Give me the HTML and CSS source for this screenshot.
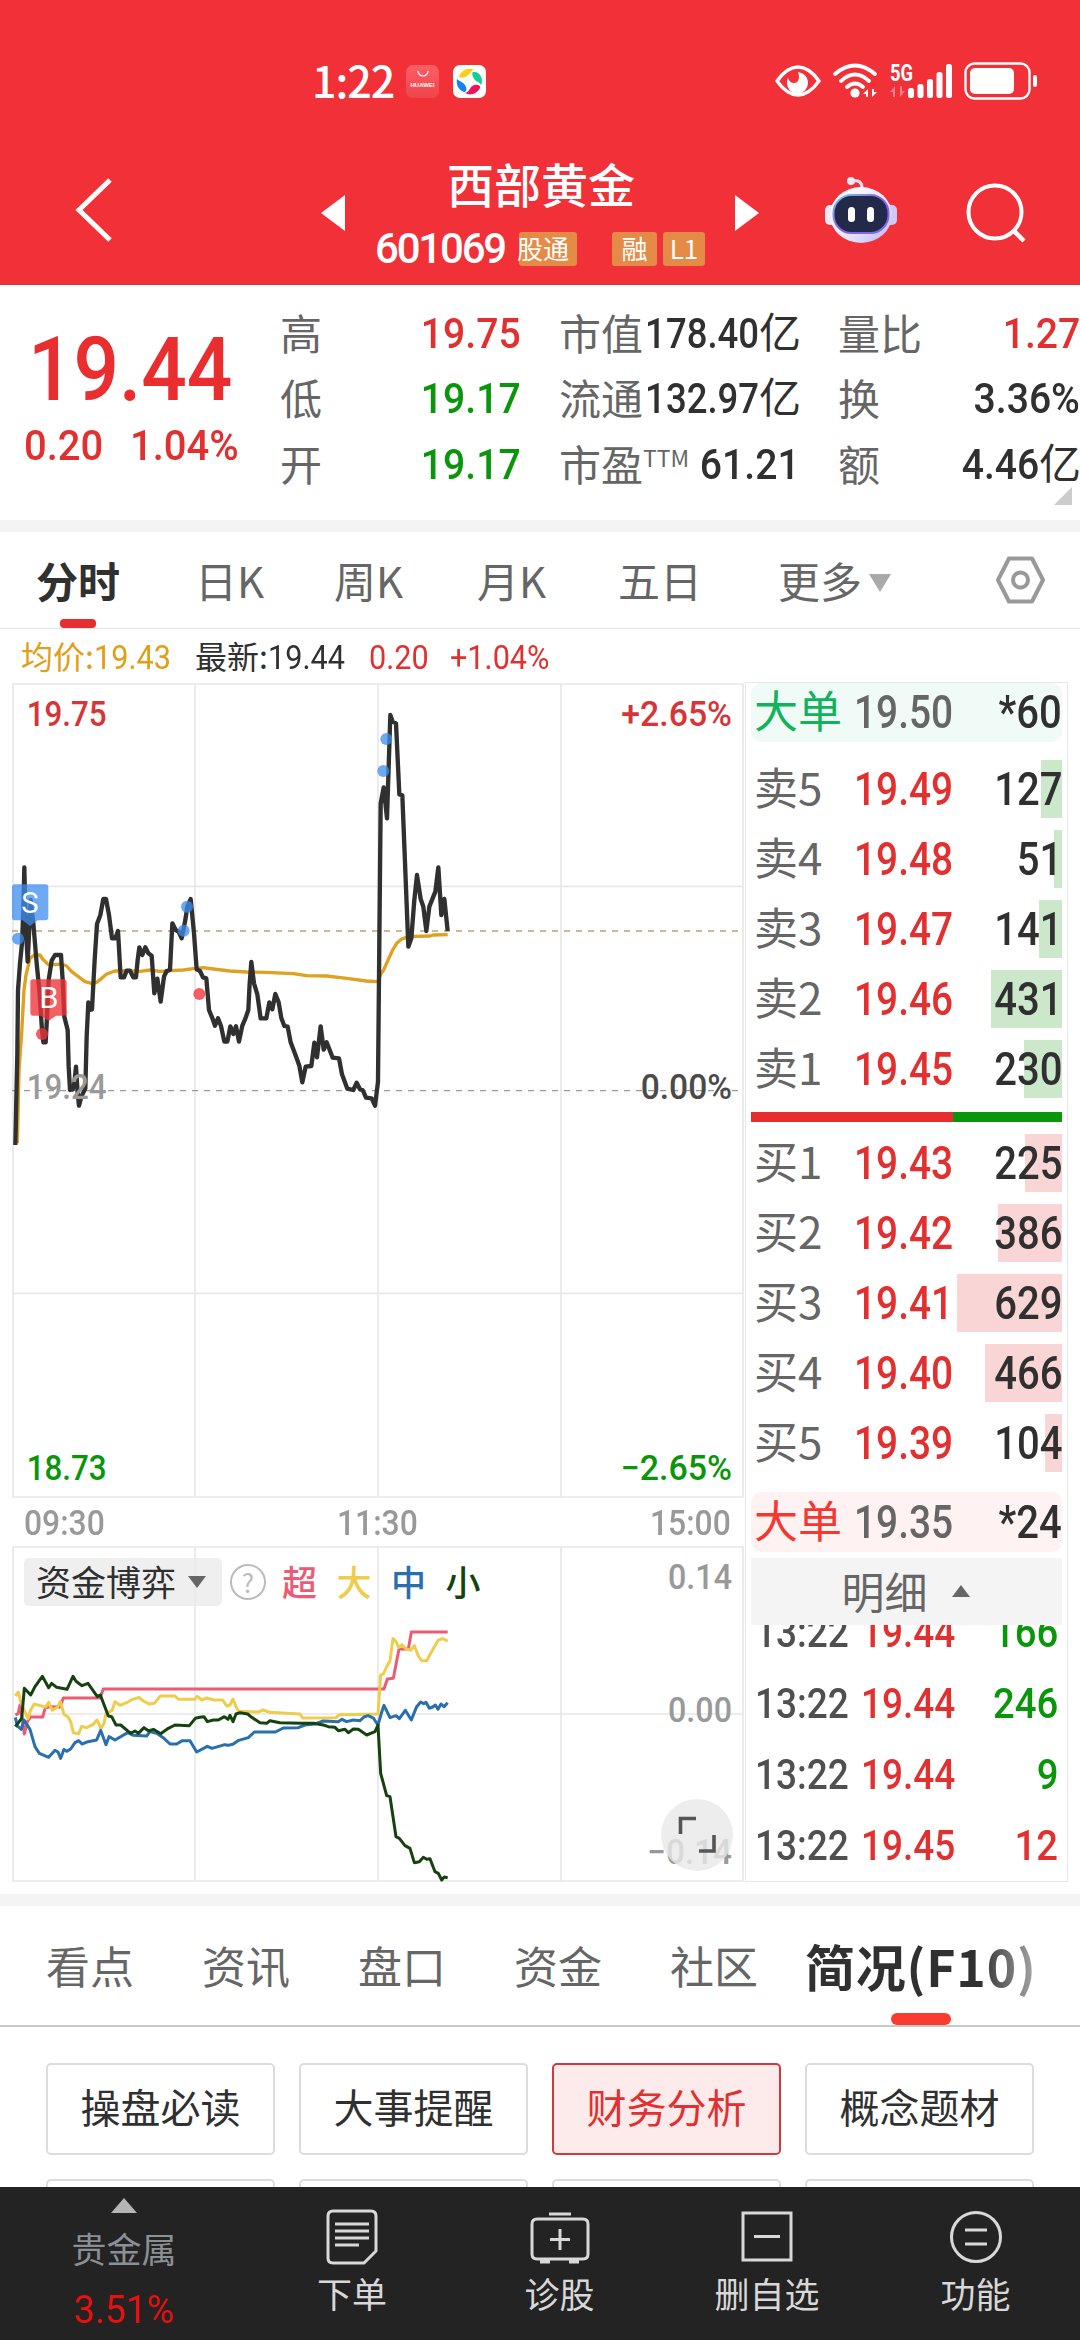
FILE: index.html
```html
<!DOCTYPE html>
<html lang="zh-CN">
<head>
  <meta charset="UTF-8" />
  <meta name="viewport" content="width=device-width, initial-scale=1.0"/>
  <title>西部黄金 601069</title>
  <link rel="stylesheet" href="styles.css">
</head>
<body>

  <header class="header">
    <!-- 状态栏 -->
    <div class="status">
      <div class="status-left">
        <span class="clock">1:22</span>
        <span class="app-huawei">
          <svg width="12" height="7" viewBox="0 0 12 7"><path d="M1 0a5 5 0 0 0 10 0" fill="none" stroke="#fff" stroke-width="1.2"/></svg>
          <span>HUAWEI</span>
        </span>
        <svg class="app-swirl" width="33" height="33" viewBox="0 0 33 33">
          <rect width="33" height="33" rx="7" fill="#fff"/>
          <path d="M6 12C8 5 16 2 21 5C17 6 17 10 12 12C9 13 7 13 6 12Z" fill="#f9cf12"/>
          <path d="M20 7C27 6 31 14 28 20C26 16 22 17 20 12C19 9 19 8 20 7Z" fill="#13cf91"/>
          <path d="M4 14C7 17 11 17 13 22C14 25 13 27 11 27C5 25 3 19 4 14Z" fill="#1383f2"/>
          <path d="M12 28C17 27 16 22 21 20C25 19 28 21 27 23C24 29 17 31 12 28Z" fill="#f21257"/>
        </svg>
      </div>
      <div class="status-right">
        <svg width="46" height="32" viewBox="0 0 46 32">
          <path d="M2 16Q12 2 23 2T44 16Q34 30 23 30T2 16Z" fill="none" stroke="#fff" stroke-width="3.4" stroke-linejoin="round"/>
          <path d="M23 7c5 1 10 4 10 11a10.500 10.500 0 0 1-21 0c0-2 0-3 1-5c1 3 3 5 6 5c5 0 6-6 4-11z" fill="#fff"/>
        </svg>
        <svg class="wifi" width="44" height="36" viewBox="0 0 44 36">
          <g fill="none" stroke="#fff" stroke-width="3.800" stroke-linecap="round">
            <path d="M2 11Q22-6 42 11M8 18Q22 5 36 18M14 24Q22 17 30 24"/>
          </g>
          <circle cx="22" cy="30" r="4.600" fill="#fff"/>
          <path d="M30 31l5-5v8h-2v-3zM44 29l-5 5v-8h2v3z" fill="#fff"/>
        </svg>
        <svg class="signal" width="64" height="36" viewBox="0 0 64 36">
          <text x="1" y="18" textLength="23" lengthAdjust="spacingAndGlyphs" class="net">5G</text>
          <path d="M1 29l5-6v11h-2v-5zM16 28l-5 6v-11h2v5z" fill="#ff8185"/>
          <g fill="#fff">
            <rect x="19" y="25" width="6" height="10" rx="2.500"/>
            <rect x="28.500" y="21" width="6" height="14" rx="2.500"/>
            <rect x="38" y="16" width="6" height="19" rx="2.500"/>
            <rect x="47.500" y="9" width="6" height="26" rx="2.500"/>
            <rect x="57" y="1" width="6" height="34" rx="2.500"/>
          </g>
        </svg>
        <svg class="battery" width="74" height="38" viewBox="0 0 74 38">
          <rect x="1.500" y="1.500" width="64" height="35" rx="9" fill="none" stroke="#fff" stroke-width="2.400"/>
          <rect x="6" y="6" width="44" height="26" rx="5" fill="#fff"/>
          <rect x="69" y="13" width="4" height="12" rx="2" fill="#fff"/>
        </svg>
      </div>
    </div>

    <!-- 标题栏 -->
    <div class="nav">
      <svg class="back" width="38" height="66" viewBox="0 0 38 66"><path d="M35 3L4 33L35 63" fill="none" stroke="#fff" stroke-width="5"/></svg>
      <svg class="prev" width="24" height="36" viewBox="0 0 24 36"><path d="M24 0v36L0 18z" fill="#fff"/></svg>
      <div class="stock">
        <h1>西部黄金</h1>
        <div class="stock-sub">
          <span class="code">601069</span>
          <span class="tag tag-cut">股通</span>
          <span class="tag tag-rong">融</span>
          <span class="tag tag-l1">L1</span>
        </div>
      </div>
      <svg class="next" width="24" height="36" viewBox="0 0 24 36"><path d="M0 0v36l24-18z" fill="#fff"/></svg>
      <svg class="robot" width="72" height="68" viewBox="0 0 72 68">
        <defs>
          <linearGradient id="shell" x1="0" y1="0" x2="1" y2="1">
            <stop offset="0" stop-color="#fff"/><stop offset=".55" stop-color="#eeeafc"/><stop offset="1" stop-color="#b9b2f0"/>
          </linearGradient>
          <linearGradient id="rim" x1="0" y1="0" x2="1" y2="1">
            <stop offset="0" stop-color="#77c9e8"/><stop offset=".5" stop-color="#8a5be8"/><stop offset="1" stop-color="#7b6cf0"/>
          </linearGradient>
        </defs>
        <path d="M27 5Q37 3 37 12" fill="none" stroke="#f3dff0" stroke-width="3"/>
        <circle cx="26" cy="5" r="4" fill="#f8e6f0"/>
        <rect x="0" y="29" width="12" height="20" rx="5" fill="#ece9fb"/>
        <rect x="60" y="29" width="12" height="20" rx="5" fill="#cfc9f3"/>
        <ellipse cx="36" cy="39" rx="31" ry="28" fill="url(#shell)"/>
        <rect x="8.500" y="19" width="55" height="38" rx="18" fill="#232a49" stroke="url(#rim)" stroke-width="2"/>
        <rect x="23" y="31" width="7" height="15" rx="3.500" fill="#fff"/>
        <rect x="42" y="31" width="7" height="15" rx="3.500" fill="#fff"/>
      </svg>
      <svg class="search" width="62" height="62" viewBox="0 0 62 62"><circle cx="29" cy="29" r="26.500" fill="none" stroke="#fff" stroke-width="4"/><path d="M48 48L58 58" stroke="#fff" stroke-width="4.500"/></svg>
    </div>
  </header>

  <!-- 行情概要 -->
  <section class="quote">
    <div class="quote-price">
      <div class="price"><span class="num">19.44</span></div>
      <div class="change"><span class="num">0.20</span><span class="num">1.04%</span></div>
    </div>
    <dl class="quote-col">
      <div><dt>高</dt><dd class="red"><span class="num">19.75</span></dd></div>
      <div><dt>低</dt><dd class="green"><span class="num">19.17</span></dd></div>
      <div><dt>开</dt><dd class="green"><span class="num">19.17</span></dd></div>
    </dl>
    <dl class="quote-col">
      <div><dt>市值</dt><dd><span class="num tight">178.40</span>亿</dd></div>
      <div><dt>流通</dt><dd><span class="num tight">132.97</span>亿</dd></div>
      <div><dt>市盈<sup>TTM</sup></dt><dd><span class="num">61.21</span></dd></div>
    </dl>
    <dl class="quote-col">
      <div><dt>量比</dt><dd class="red"><span class="num">1.27</span></dd></div>
      <div><dt>换</dt><dd><span class="num">3.36%</span></dd></div>
      <div><dt>额</dt><dd><span class="num">4.46</span>亿</dd></div>
    </dl>
    <i class="corner"></i>
  </section>

  <!-- 周期切换 -->
  <nav class="periods">
    <span class="active">分时</span>
    <span>日K</span>
    <span>周K</span>
    <span>月K</span>
    <span>五日</span>
    <span class="more">更多<i></i></span>
    <svg width="50" height="50" viewBox="0 0 50 50" fill="none" stroke="#999" stroke-width="4" stroke-linejoin="round">
      <path d="M14 3.500H37L48 25L37 46.500H14L3 25Z"/><circle cx="25.500" cy="25" r="7.500"/>
    </svg>
  </nav>

  <div class="legend">
    <span class="avg">均价:<span class="num">19.43</span></span>
    <span class="last">最新:<span class="num">19.44</span></span>
    <span class="num red">0.20</span>
    <span class="num red">+1.04%</span>
  </div>

  <section class="board">
    <div class="charts">
      <!-- 分时图，坐标为三倍像素 -->
      <svg class="chart-main" width="733" height="815" viewBox="36 39 2199 2445">
        <g class="grid">
          <path d="M39 42H2229V2481H39ZM585 42V2481M1134 42V2481M1683 42V2481M39 649H2229M39 1870H2229"/>
        </g>
        <path class="dash last-line" d="M36 783H2229"/>
        <path class="dash" d="M36 1262H2229"/>
        <polyline class="avg-line" points="52,1420 57,1200 65,1090 72,960 78,915 90,865 103,855 120,855 128,867 145,884 165,884 185,882 200,888 215,905 235,920 255,935 275,940 290,937 305,925 320,912 345,903 380,902 420,904 450,900 480,904 510,902 550,900 580,896 610,893 640,897 690,903 740,906 800,907 880,911 920,917 980,918 1040,925 1100,933 1134,935 1142,912 1151,900 1165,868 1178,840 1190,820 1205,807 1225,800 1250,799 1290,798 1300,795 1343,794"/>
        <polyline class="price-line" points="46,1425 52,1150 54,960 60,880 66,820 70,720 73,592 77,760 83,875 92,690 100,760 110,880 118,960 126,1080 130,1117 137,1117 140,1060 146,930 155,872 165,855 183,855 188,930 193,1040 203,1080 206,1190 210,1260 218,1258 223,1240 228,1190 233,1270 237,1307 244,1280 256,1255 260,1100 265,997 269,1020 276,1018 284,870 291,762 301,735 310,687 318,687 327,735 336,805 346,805 354,783 362,922 372,922 380,902 390,902 400,922 408,922 413,870 418,832 427,855 436,832 445,850 455,857 463,970 472,926 482,995 492,920 500,903 510,900 517,760 527,780 536,785 545,805 556,750 562,710 572,687 582,790 590,898 600,903 609,922 619,925 627,1020 636,1042 645,1067 654,1045 663,1068 673,1115 682,1115 691,1069 700,1092 708,1069 717,1115 727,1067 736,1046 745,1020 749,940 754,876 762,940 772,973 782,1045 799,1045 808,997 817,1018 826,972 836,997 844,1044 853,1068 863,1070 872,1117 890,1165 898,1187 907,1237 917,1190 934,1188 943,1118 951,1162 962,1069 971,1139 980,1117 998,1163 1017,1165 1026,1213 1042,1256 1060,1260 1070,1238 1080,1258 1088,1260 1098,1283 1115,1285 1125,1307 1134,1235 1142,400 1151,352 1161,445 1171,135 1178,155 1188,160 1198,373 1207,376 1225,830 1234,805 1243,690 1251,615 1262,687 1270,710 1279,783 1288,710 1306,665 1315,592 1324,735 1333,687 1343,783"/>
        <g class="dot-sell"><circle cx="54" cy="806" r="18"/><circle cx="551" cy="782" r="18"/><circle cx="561" cy="710" r="18"/><circle cx="1150" cy="303" r="18"/><circle cx="1159" cy="207" r="18"/></g>
        <g class="dot-buy"><circle cx="126" cy="1092" r="18"/><circle cx="598" cy="972" r="18"/></g>
        <path class="flag-sell" d="M44 643H136Q145 643 145 652V742Q145 751 136 751H113L90 768L68 751H44Q36 751 36 742V652Q36 643 44 643Z"/>
        <text class="flag" x="64" y="729" textLength="52" lengthAdjust="spacingAndGlyphs">S</text>
        <path class="flag-buy" d="M99 928H191Q200 928 200 937V1028Q200 1037 191 1037H168L146 1053L122 1037H99Q91 1037 91 1028V937Q91 928 99 928Z"/>
        <text class="flag" x="118" y="1014" textLength="58" lengthAdjust="spacingAndGlyphs">B</text>
        <g class="axis">
          <text class="up" x="80" y="168" textLength="240" lengthAdjust="spacingAndGlyphs">19.75</text>
          <text class="up" x="1864" y="168" textLength="332" lengthAdjust="spacingAndGlyphs">+2.65%</text>
          <text class="mid" x="80" y="1287" textLength="240" lengthAdjust="spacingAndGlyphs">19.24</text>
          <text class="zero" x="1922" y="1287" textLength="274" lengthAdjust="spacingAndGlyphs">0.00%</text>
          <text class="down" x="80" y="2430" textLength="240" lengthAdjust="spacingAndGlyphs">18.73</text>
          <text class="down" x="1862" y="2430" textLength="334" lengthAdjust="spacingAndGlyphs">−2.65%</text>
        </g>
      </svg>

      <div class="times"><span class="num">09:30</span><span class="num">11:30</span><span class="num">15:00</span></div>

      <!-- 资金博弈 -->
      <div class="funds">
        <svg class="chart-sub" width="733" height="336" viewBox="36 318 2199 1008">
          <g class="grid">
            <path d="M39 321H2229V1323H39ZM585 321V1323M1134 321V1323M1683 321V1323M39 822H2229"/>
          </g>
          <polyline class="super" points="46,824 54,822 60,795 66,830 73,882 82,845 92,831 128,831 136,803 150,800 180,801 190,774 300,774 310,747 1152,747 1162,717 1180,715 1197,627 1225,627 1234,576 1343,576"/>
          <polyline class="big" points="46,768 55,756 62,785 73,812 84,836 92,810 102,793 118,796 137,801 146,787 157,811 172,802 181,785 192,823 204,831 212,845 220,878 236,881 245,859 260,863 280,853 291,840 303,865 312,850 318,820 336,812 345,785 360,796 380,788 395,779 417,772 430,783 447,792 463,790 481,768 525,768 536,778 584,778 592,769 605,780 620,774 642,780 668,780 680,798 690,795 699,777 708,800 716,814 775,816 790,810 808,817 900,822 908,834 1008,833 1018,824 1134,822 1142,705 1150,702 1161,678 1170,662 1179,596 1188,605 1196,622 1206,614 1216,625 1232,631 1243,617 1255,648 1265,662 1280,662 1292,640 1315,600 1330,596 1343,604"/>
          <polyline class="middle" points="46,832 52,858 64,868 72,840 90,868 105,920 118,940 146,952 165,931 174,936 182,955 192,928 200,934 212,927 225,908 236,902 246,912 264,905 290,900 302,871 318,914 327,890 345,900 383,878 400,886 440,888 450,875 470,880 492,895 510,912 530,912 547,902 570,902 590,936 622,919 636,925 674,914 685,916 700,912 716,901 745,893 763,876 826,876 850,864 895,863 915,855 945,852 970,843 1015,845 1026,838 1040,845 1060,840 1080,842 1092,831 1104,827 1120,834 1134,855 1144,820 1152,796 1170,833 1188,827 1198,836 1216,811 1234,840 1250,800 1262,786 1271,791 1278,787 1288,805 1298,801 1306,795 1314,808 1323,792 1332,800 1343,788"/>
          <polyline class="small" points="46,860 65,835 73,745 92,765 105,740 127,709 146,743 155,730 170,742 201,748 219,709 228,724 246,737 264,730 292,770 301,765 325,828 335,830 348,855 362,855 392,880 405,873 415,880 432,863 446,873 460,868 482,881 505,865 525,855 568,857 586,835 600,832 612,830 622,845 640,840 655,840 673,830 684,838 690,826 699,845 708,822 720,818 743,822 755,832 780,848 800,850 810,842 840,848 905,850 940,850 970,855 985,860 1005,862 1015,872 1035,868 1045,878 1060,867 1075,868 1100,885 1125,875 1134,855 1142,1000 1160,1067 1170,1070 1188,1190 1198,1195 1215,1217 1230,1225 1243,1268 1258,1265 1270,1252 1280,1258 1290,1256 1305,1295 1315,1300 1325,1320 1333,1311 1343,1313"/>
          <g class="axis">
            <text class="mid" x="2004" y="446" textLength="192" lengthAdjust="spacingAndGlyphs">0.14</text>
            <text class="mid" x="2004" y="845" textLength="192" lengthAdjust="spacingAndGlyphs">0.00</text>
            <text class="mid" x="1942" y="1272" textLength="254" lengthAdjust="spacingAndGlyphs">−0.14</text>
          </g>
        </svg>
        <div class="funds-bar">
          <span class="funds-pick">资金博弈<i></i></span>
          <span class="help">?</span>
          <span class="c-super">超</span><span class="c-big">大</span><span class="c-middle">中</span><span class="c-small">小</span>
        </div>
        <span class="expand">
          <svg width="36" height="36" viewBox="0 0 36 36"><path d="M1.500 17V1.500H17M35 18V34H20" fill="none" stroke="#555" stroke-width="3.600"/></svg>
        </span>
      </div>
    </div>

    <!-- 五档盘口 -->
    <div class="book">
      <div class="row large sell"><span>大单</span><span class="num">19.50</span><b class="num">*60</b></div>
      <div class="row ask"><span>卖5</span><span class="num">19.49</span><b class="num">127</b><i style="width:21px"></i></div>
      <div class="row ask"><span>卖4</span><span class="num">19.48</span><b class="num">51</b><i style="width:8px"></i></div>
      <div class="row ask"><span>卖3</span><span class="num">19.47</span><b class="num">141</b><i style="width:23px"></i></div>
      <div class="row ask"><span>卖2</span><span class="num">19.46</span><b class="num">431</b><i style="width:71px"></i></div>
      <div class="row ask"><span>卖1</span><span class="num">19.45</span><b class="num">230</b><i style="width:38px"></i></div>
      <div class="ratio"><i></i></div>
      <div class="row bid"><span>买1</span><span class="num">19.43</span><b class="num">225</b><i style="width:37px"></i></div>
      <div class="row bid"><span>买2</span><span class="num">19.42</span><b class="num">386</b><i style="width:64px"></i></div>
      <div class="row bid"><span>买3</span><span class="num">19.41</span><b class="num">629</b><i style="width:105px"></i></div>
      <div class="row bid"><span>买4</span><span class="num">19.40</span><b class="num">466</b><i style="width:77px"></i></div>
      <div class="row bid"><span>买5</span><span class="num">19.39</span><b class="num">104</b><i style="width:17px"></i></div>
      <div class="row large buy"><span>大单</span><span class="num">19.35</span><b class="num">*24</b></div>
      <div class="detail-title">明细<i></i></div>
      <div class="details">
        <div class="deal"><span class="num">13:22</span><span class="num red">19.44</span><span class="num green">166</span></div>
        <div class="deal"><span class="num">13:22</span><span class="num red">19.44</span><span class="num green">246</span></div>
        <div class="deal"><span class="num">13:22</span><span class="num red">19.44</span><span class="num green">9</span></div>
        <div class="deal"><span class="num">13:22</span><span class="num red">19.45</span><span class="num red">12</span></div>
      </div>
    </div>
  </section>

  <!-- 资讯分类 -->
  <nav class="info-tabs">
    <span>看点</span>
    <span>资讯</span>
    <span>盘口</span>
    <span>资金</span>
    <span>社区</span>
    <span class="active">简况(F10)</span>
  </nav>

  <section class="topics">
    <a>操盘必读</a>
    <a>大事提醒</a>
    <a class="active">财务分析</a>
    <a>概念题材</a>
    <a></a>
    <a></a>
    <a></a>
    <a></a>
  </section>

  <!-- 底部工具栏 -->
  <footer class="toolbar">
    <div class="sector">
      <i></i>
      <span>贵金属</span>
      <span class="num">3.51%</span>
    </div>
    <div class="tool">
      <svg width="54" height="56" viewBox="0 0 54 56"><path d="M8 2H46Q51 2 51 7V42L39 54H8Q3 54 3 49V7Q3 2 8 2Z"/><path d="M10 15H44M10 22H44M10 29H44M10 36H34"/></svg>
      <span>下单</span>
    </div>
    <div class="tool">
      <svg width="60" height="56" viewBox="0 0 60 56"><path d="M7 10H53Q58 10 58 15V45Q58 50 53 50H7Q2 50 2 45V15Q2 10 7 10ZM19 5H41M30 20V41M20 30.500H40M10 53H20M39 53H49"/></svg>
      <span>诊股</span>
    </div>
    <div class="tool">
      <svg width="54" height="56" viewBox="0 0 54 56"><path d="M3 4H51V51H3ZM14 27.500H40"/></svg>
      <span>删自选</span>
    </div>
    <div class="tool">
      <svg width="54" height="56" viewBox="0 0 54 56"><circle cx="27" cy="28" r="24.500"/><path d="M16 21H38M16 35H38"/></svg>
      <span>功能</span>
    </div>
  </footer>

</body>
</html>
```

FILE: styles.css
```css
* {
  margin: 0;
  padding: 0;
  box-sizing: border-box;
}

body {
  width: 1080px;
  height: 2340px;
  overflow: hidden;
  background: #fff;
  font-family: "Noto Sans CJK SC", sans-serif;
  color: #303030;
  line-height: 1;
  position: relative;
}

svg {
  display: block;
  flex: none;
  overflow: visible;
}

/* 数字用窄一些的字形 */
.num {
  display: inline-block;
  font-family: Roboto, "Noto Sans CJK SC", sans-serif;
  font-weight: 500;
  transform: scaleX(0.87);
  transform-origin: right center;
}

.red {
  color: #e23030;
}
.green {
  color: #0a960a;
}

/* 顶部红色区域 */
.header {
  height: 285px;
  background: #f23038;
  color: #fff;
  border-bottom: 1px solid #d8353c;
}

.status {
  height: 150px;
  padding: 54px 42px 42px 312px;
  display: flex;
  justify-content: space-between;
  align-items: center;
}

.status-left,
.status-right {
  display: flex;
  align-items: center;
}

.clock {
  width: 94px;
  margin-top: -3px;
  font-family: "Noto Sans CJK SC", sans-serif;
  font-size: 43px;
  font-weight: 500;
  letter-spacing: -1px;
}

.app-huawei {
  width: 33px;
  height: 33px;
  border-radius: 7px;
  background: linear-gradient(#fb5f64, #f0444c);
  display: flex;
  flex-direction: column;
  align-items: center;
  padding-top: 6px;
  gap: 4px;
}
.app-huawei span {
  font-family: "Liberation Sans", sans-serif;
  font-weight: bold;
  font-size: 6px;
}

.app-swirl {
  margin-left: 14px;
}

.wifi {
  margin-left: 12px;
}
.signal {
  margin-left: 12px;
}
.battery {
  margin-left: 11px;
}

.net {
  font-family: Roboto, sans-serif;
  font-weight: 700;
  font-size: 23px;
  fill: #fff;
}

.nav {
  height: 134px;
  padding-left: 75px;
  display: flex;
  align-items: flex-start;
}
.back {
  margin-top: 27px;
}
.prev {
  margin: 45px 0 0 208px;
}
.next {
  margin-top: 45px;
}
.robot {
  margin: 26px 0 0 66px;
}
.search {
  margin: 33px 0 0 69px;
}

.stock {
  width: 390px;
  padding: 8px 0 0 30px;
}
.stock h1 {
  width: 332px;
  text-align: center;
  font-size: 47px;
  line-height: 50px;
  font-weight: 500;
}
.stock-sub {
  margin-top: 23px;
  display: flex;
  align-items: center;
}
.code {
  width: 144px;
  font-family: Roboto, sans-serif;
  font-size: 42px;
  line-height: 35px;
  font-weight: 500;
  letter-spacing: -2.200px;
}
.tag {
  height: 34px;
  line-height: 31px;
  font-size: 26px;
  text-align: center;
  background: #e58b48;
  border-radius: 3px;
}
.tag-cut {
  width: 58px;
  text-indent: -2px;
  text-align: left;
}
.tag-rong {
  width: 45px;
  margin-left: 35px;
}
.tag-l1 {
  width: 42px;
  margin-left: 6px;
}

/* 行情概要 */
.quote {
  position: relative;
  height: 247px;
  border-bottom: 12px solid #f4f4f4;
  display: flex;
}
.quote-price {
  width: 280px;
  padding-top: 37px;
}
.quote-price .num {
  transform-origin: left center;
}
.price {
  padding-left: 28px;
  font-size: 89px;
  line-height: 80px;
  color: #ea2e2f;
}
.price .num {
  transform: scaleX(0.9);
}
.change {
  margin-top: 13px;
  padding-left: 24px;
  font-size: 43px;
  line-height: 44px;
  color: #e23030;
  display: flex;
  gap: 21px;
}
.change .num {
  transform: scaleX(0.93);
}
.quote-col {
  width: 241px;
  margin-right: 38px;
  padding-top: 14px;
}
.quote-col:nth-of-type(3) {
  margin-right: 0;
  width: 242px;
}
.quote-col div {
  height: 65.500px;
  display: flex;
  justify-content: space-between;
  align-items: center;
  white-space: nowrap;
}
.quote-col dt {
  font-size: 42px;
  color: #666;
}
.quote-col dd {
  font-size: 42px;
  letter-spacing: -1px;
}
.quote-col dd .num {
  font-size: 43px;
  letter-spacing: 0;
  transform: scaleX(0.91);
}
.quote-col dd .tight {
  margin-left: -20px;
  transform: scaleX(0.85);
}
.quote-col sup {
  font-size: 23px;
  vertical-align: 14px;
  line-height: 0;
}
.corner {
  position: absolute;
  right: 8px;
  bottom: 15px;
  border-left: 18px solid transparent;
  border-bottom: 18px solid #ccc;
}

/* 周期切换 */
.periods {
  height: 97px;
  padding-left: 36px;
  border-bottom: 1px solid #e6e6e6;
  display: grid;
  grid-template-columns: 159px 139px 143px 141px 160px 217px 50px;
  align-items: center;
  font-size: 42px;
  line-height: 94px;
  color: #666;
}
.periods .active {
  position: relative;
  font-weight: 700;
  color: #303030;
}
.periods .active::after {
  content: "";
  position: absolute;
  left: 24px;
  bottom: -1px;
  width: 36px;
  height: 9px;
  border-radius: 4px;
  background: #e62e2e;
}
.more i {
  display: inline-block;
  margin-left: 7px;
  vertical-align: 6px;
  border: 11px solid transparent;
  border-top: 18px solid #aaa;
  border-bottom: 0;
}

.legend {
  height: 53px;
  padding: 2px 0 0 21px;
  display: flex;
  align-items: center;
  font-size: 32px;
  line-height: 53px;
}
.legend .num {
  font-size: 34px;
  font-weight: 400;
  transform: scaleX(0.9);
  transform-origin: left center;
}
.legend .avg {
  width: 174px;
  color: #e39e17;
}
.legend .last {
  width: 174px;
}
.legend > .num {
  width: 81px;
  margin-top: 1px;
}

/* 图表与盘口 */
.board {
  height: 1224px;
  padding-left: 12px;
  border-bottom: 12px solid #f4f4f4;
  display: flex;
  align-items: flex-start;
}
.charts {
  width: 733px;
  padding-top: 1px;
}
.chart-main,
.chart-sub {
  overflow: hidden;
}
.grid path {
  fill: none;
  stroke: #e8e8e8;
  stroke-width: 5;
}
.dash {
  fill: none;
  stroke: #999;
  stroke-width: 4;
  stroke-dasharray: 18 18;
}
.last-line {
  stroke: #b9a56f;
}
polyline {
  fill: none;
  stroke-linejoin: round;
}
.price-line {
  stroke: #303030;
  stroke-width: 13;
}
.avg-line {
  stroke: #e0a020;
  stroke-width: 10;
}
.dot-sell,
.flag-sell {
  fill: #3d8df0;
  opacity: 0.75;
}
.dot-buy,
.flag-buy {
  fill: #ee3338;
  opacity: 0.78;
}
.flag {
  font-family: Roboto, sans-serif;
  font-size: 90px;
  fill: #fff;
}
.axis {
  font-family: Roboto, sans-serif;
  font-weight: 500;
  font-size: 105px;
}
.up {
  fill: #d83438;
}
.down {
  fill: #0a960a;
}
.mid {
  fill: #999;
}
.zero {
  fill: #4a4a4a;
}

.times {
  height: 48px;
  padding: 2px 14px 0 12px;
  display: flex;
  justify-content: space-between;
  align-items: center;
  font-size: 35px;
  color: #999;
}
.times .num {
  transform: scaleX(0.91);
  transform-origin: center;
}
.times .num:first-child {
  transform-origin: left center;
}
.times .num:last-child {
  transform-origin: right center;
}

.funds {
  position: relative;
}
.super { stroke: #ec5b73; stroke-width: 9; }
.big { stroke: #efcd4b; stroke-width: 9; }
.middle { stroke: #2a6fad; stroke-width: 9; }
.small { stroke: #15420f; stroke-width: 9; }

.funds-bar {
  position: absolute;
  left: 12px;
  top: 12px;
  height: 48px;
  display: flex;
  align-items: center;
  font-size: 35px;
  font-weight: 500;
}
.funds-pick {
  width: 198px;
  height: 48px;
  line-height: 46px;
  padding-left: 12px;
  font-weight: 400;
  background: rgba(235, 235, 235, 0.8);
  border-radius: 5px;
  display: flex;
  align-items: center;
  padding-bottom: 2px;
}
.funds-pick i {
  margin: 2px 0 0 12px;
  border: 9px solid transparent;
  border-top: 12px solid #666;
  border-bottom: 0;
}
.help {
  width: 36px;
  height: 36px;
  margin: 0 16px 0 8px;
  border: 2px solid #bbb;
  border-radius: 50%;
  color: #bbb;
  font-size: 26px;
  line-height: 31px;
  font-weight: 400;
  text-align: center;
}
.funds-bar > span[class^="c-"] {
  width: 54.500px;
  margin-top: -4px;
}
.c-super { color: #ec5b73; }
.c-big { color: #efcd4b; }
.c-middle { color: #2a6fad; }
.c-small { color: #15420f; }

.expand {
  position: absolute;
  left: 649px;
  top: 253px;
  width: 72px;
  height: 72px;
  border-radius: 50%;
  background: rgba(232, 232, 232, 0.8);
  display: flex;
  align-items: center;
  justify-content: center;
}

/* 盘口 */
.book {
  width: 323px;
  height: 1200px;
  padding: 0 5px;
  border: 1px solid #e8e8e8;
}
.row {
  position: relative;
  height: 58px;
  margin-bottom: 12px;
  padding: 0 0 0 3px;
  display: flex;
  align-items: center;
  font-size: 44px;
  color: #666;
  white-space: nowrap;
}
.row span:first-child {
  width: 100px;
  line-height: 56px;
  margin-top: -6px;
}
.row .num {
  z-index: 1;
  font-size: 46px;
}
.row span.num {
  transform: scaleX(0.845);
  transform-origin: left center;
}
.row b {
  margin-left: auto;
  color: #303030;
}
.row i {
  position: absolute;
  right: 0;
  top: 0;
  height: 58px;
}
.ask span.num,
.bid span.num {
  color: #e23030;
}
.ask i {
  background: #cbe9ca;
}
.bid i {
  background: #f9d5d6;
}
.large {
  height: 59px;
  border-radius: 10px;
  margin-bottom: 18px;
}
.large.sell {
  padding-bottom: 2px;
  background: #f0faf6;
}
.large.sell span:first-child {
  color: #10b35c;
}
.large.buy {
  height: 60px;
  margin: 20px 0 6px;
  background: #fff2f2;
}
.large.buy span:first-child {
  color: #f5382f;
}
.ratio {
  height: 10px;
  margin: 14px 0 12px;
  background: #0a960a;
}
.ratio i {
  display: block;
  width: 202px;
  height: 10px;
  background: #e62e2e;
}
.detail-title {
  height: 67px;
  background: #f4f4f4;
  display: flex;
  justify-content: center;
  align-items: center;
  font-size: 43px;
  line-height: 60px;
  color: #666;
  padding-bottom: 3px;
}
.detail-title i {
  margin: 2px 2px 0 24px;
  border: 9px solid transparent;
  border-bottom: 12px solid #666;
  border-top: 0;
}
.details {
  height: 255px;
  overflow: hidden;
}
.deal {
  height: 71px;
  padding: 0 4px 0 4px;
  display: flex;
  align-items: center;
  font-size: 43px;
  color: #505050;
  position: relative;
  top: -28px;
}
.deal .num {
  transform: scaleX(0.86);
  transform-origin: left center;
}
.deal .num:first-child {
  width: 106px;
}
.deal .num:last-child {
  margin-left: auto;
  transform: scaleX(0.89);
  transform-origin: right center;
}

/* 资讯分类 */
.info-tabs {
  height: 121px;
  padding-left: 46px;
  border-bottom: 2px solid #c8c8c8;
  display: flex;
  align-items: center;
  gap: 68px;
  font-size: 44px;
  line-height: 117px;
  color: #666;
}
.info-tabs .active {
  position: relative;
  margin-left: -21px;
  font-size: 50px;
  font-weight: 700;
  letter-spacing: 0.800px;
  background: linear-gradient(90deg, #303030 75%, #aaa);
  background-clip: text;
  -webkit-background-clip: text;
  color: transparent;
  white-space: nowrap;
}
.info-tabs .active::after {
  content: "";
  position: absolute;
  left: 86px;
  bottom: -1px;
  width: 60px;
  height: 12px;
  border-radius: 6px;
  background: #fb3a30;
}

.topics {
  padding: 36px 46px 0;
  height: 160px;
  overflow: hidden;
  display: grid;
  grid-template-columns: repeat(4, 229px);
  grid-auto-rows: 92px;
  gap: 24px;
}
.topics a {
  border: 2.500px solid #dcdcdc;
  border-radius: 5px;
  font-size: 40px;
  line-height: 82px;
  text-align: center;
}
.topics .active {
  color: #e23030;
  border-color: #d03a3c;
  background: #fdeaea;
}

/* 底部工具栏 */
.toolbar {
  height: 153px;
  background: #232323;
  display: grid;
  grid-template-columns: 248px 208px 207px 208px 209px;
  color: #d8d8d8;
  font-size: 35px;
}
.sector,
.tool {
  display: flex;
  flex-direction: column;
  align-items: center;
}
.sector {
  padding-top: 11px;
  color: #8a9094;
}
.sector i {
  border: 13px solid transparent;
  border-bottom: 15px solid #b5b5b5;
  border-top: 0;
  margin-bottom: 17px;
}
.sector .num {
  margin-top: 26px;
  font-size: 39px;
  font-weight: 400;
  color: #e81010;
  transform: scaleX(0.96);
  transform-origin: center;
}
.tool {
  padding-top: 22px;
}
.tool svg {
  fill: none;
  stroke: #d8d8d8;
  stroke-width: 3;
}
.tool span {
  margin-top: 10px;
}
```
